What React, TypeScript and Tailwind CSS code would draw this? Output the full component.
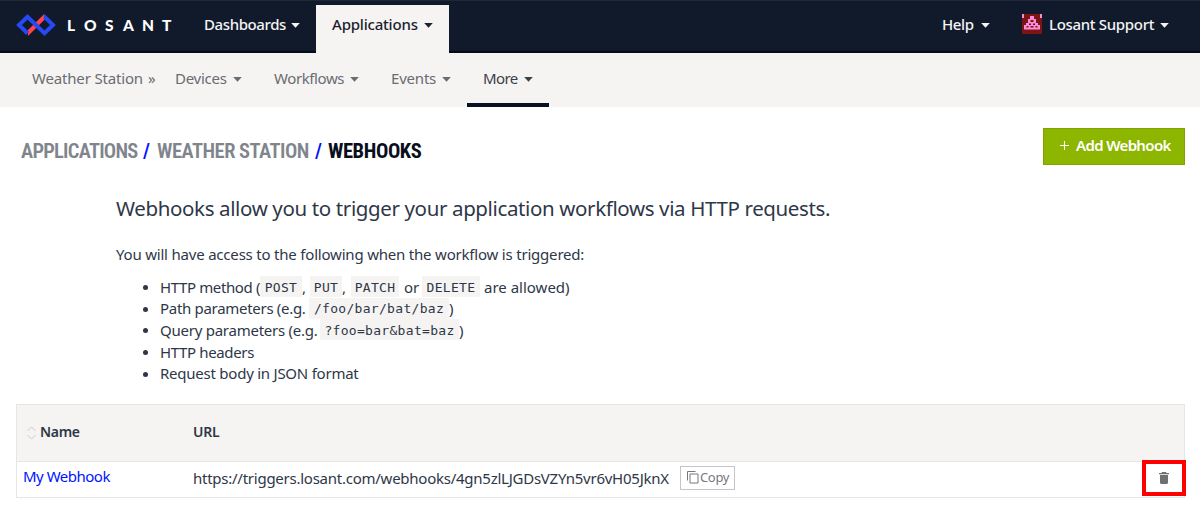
import type { ReactNode } from 'react';

function Caret({ className = '' }: { className?: string }) {
  return (
    <svg viewBox="0 0 9 5" className={`h-[5px] w-[9px] shrink-0 ${className}`}>
      <path d="M0.2 0H8.8L4.5 4.8Z" fill="currentColor" />
    </svg>
  );
}

function Logo() {
  return (
    <svg viewBox="0 0 40 22" className="mt-[14px] h-[22px] w-10 shrink-0" fill="none" strokeWidth="4">
      <path d="M28.2 0V6L12 22V16Z" fill="#ff424d" />
      <path d="M11.5 19.2L3 11L11.5 2.8L28.5 19.2L37 11L28.5 2.8" stroke="#2549f5" />
      <path d="M9.8 17.6L11.5 19.2" stroke="#2549f5" />
      <path d="M28.2 0L30 1.5V5L28.2 6Z" fill="#2549f5" />
    </svg>
  );
}

function Avatar() {
  return (
    <svg viewBox="0 0 20 20" className="h-5 w-5 shrink-0">
      <rect width="20" height="20" fill="#7f1416" />
      <path
        fill="#f98bd9"
        d="M0 0H2V4H0ZM18 0H20V4H18ZM8 2H12V5H14V9H16V11H18V15.5H2V11H4V9H6V5H8Z"
      />
      <path
        fill="#7f1416"
        d="M8.5 6H11.5V8H8.5ZM7 9.5H9V11H7ZM11 9.5H13V11H11ZM4.5 12H6.5V13.5H4.5ZM8.5 12H11.5V13.5H8.5ZM13.5 12H15.5V13.5H13.5Z"
      />
    </svg>
  );
}

function Code({ className, children }: { className: string; children: ReactNode }) {
  return (
    <code
      className={`flex h-[21px] shrink-0 items-center justify-center bg-[#f5f4f2] pt-0.5 font-['DejaVu_Sans_Mono',monospace] text-[13px] tracking-[0.3px] ${className}`}
    >
      {children}
    </code>
  );
}

function Item({ children }: { children: ReactNode }) {
  return (
    <li className="flex h-[21.6px] items-center">
      <span className="ml-[28px] mr-[12px] mt-0.5 h-[5px] w-[5px] -translate-x-px shrink-0 rounded-full bg-[#2e3748]" />
      <div className="-ml-px flex items-center">{children}</div>
    </li>
  );
}

export default function App() {
  return (
    <div className="h-[522px] w-[1200px] overflow-hidden whitespace-nowrap bg-white font-['Noto_Sans',sans-serif] text-[15px] leading-5 text-[#2e3748]">
      <header className="flex h-[53px] border-b-2 border-t border-b-[#060d19] border-t-[#1d2738] bg-[#111a2b] pl-4 font-medium text-[#f4f4f5]">
        <div className="-mt-px flex w-[188px] shrink-0">
          <Logo />
          <div className="ml-[11px] mt-[15px] flex font-['Lato',sans-serif] text-[15.5px] font-black leading-[20px] text-white">
            <span className="w-[17px]">L</span>
            <span className="w-[21px]">O</span>
            <span className="w-[18px]">S</span>
            <span className="w-[19px]">A</span>
            <span className="w-[20px]">N</span>
            <span className="w-[12px]">T</span>
          </div>
        </div>
        <nav className="flex">
          <a className="flex h-[46px] w-[112px] items-center">
            <span className="w-[87px] tracking-[-0.4px]">Dashboards</span>
            <Caret className="mt-[3px]" />
          </a>
          <a className="mt-1 flex h-[49px] w-[133px] items-center bg-[#f5f4f2] pb-[11px] pl-4 text-[#1b222d]">
            <span className="w-[92px] tracking-[-0.2px]">Applications</span>
            <Caret className="mt-[3px]" />
          </a>
        </nav>
        <div className="ml-auto flex h-[46px] items-center pr-[31px]">
          <span className="w-[39px] tracking-[-0.4px]">Help</span>
          <Caret className="mr-8 mt-[3px]" />
          <Avatar />
          <span className="ml-[7px] w-[111px] tracking-[-0.32px]">Losant Support</span>
          <Caret className="mt-[3px]" />
        </div>
      </header>

      <nav className="flex h-[54px] bg-[#f5f4f2] pl-8 text-[#696c72]">
        <span className="mt-[15px] w-[116px] tracking-[-0.17px]">Weather Station</span>
        <span className="mt-[15px] w-[27px]">»</span>
        <a className="flex h-[50px] w-[99px] items-center">
          <span className="w-[58px] tracking-[-0.25px]">Devices</span>
          <Caret className="mt-[3px]" />
        </a>
        <a className="flex h-[50px] w-[117px] items-center">
          <span className="w-[76px] tracking-[-0.4px]">Workflows</span>
          <Caret className="mt-[3px]" />
        </a>
        <a className="flex h-[50px] w-[76px] items-center">
          <span className="w-[51px] tracking-[-0.2px]">Events</span>
          <Caret className="mt-[3px]" />
        </a>
        <a className="flex h-[54px] w-[82px] items-center border-b-4 border-[#091222] pl-4 text-[#3b4049]">
          <span className="w-[41px] tracking-[-0.6px]">More</span>
          <Caret className="mt-[3px]" />
        </a>
      </nav>

      <div className="flex justify-between pl-[21px] pr-[15px] pt-[21px]">
        <h1 className="mt-[11px] flex h-6 items-center font-['Roboto_Condensed',sans-serif] text-[20.5px] font-semibold text-[#80858d]">
          <span className="w-[122px] tracking-[-0.75px]">APPLICATIONS</span>
          <span className="w-[14px] text-[#0015ff]">/</span>
          <span className="w-[158px] tracking-[-0.5px]">WEATHER STATION</span>
          <span className="w-[13px] text-[#0015ff]">/</span>
          <span className="font-bold tracking-[-0.4px] text-[#080e1b]">WEBHOOKS</span>
        </h1>
        <button className="flex h-[37px] w-[142px] items-center border border-[#7fa300] bg-[#8db600] pb-[3px] pl-4 font-semibold text-white">
          <svg viewBox="0 0 10 10" className="mr-[7px] h-[9px] w-[9px]" stroke="currentColor" strokeWidth="1.2">
            <path d="M5 0V10M0 5H10" />
          </svg>
          <span className="tracking-[-0.65px]">Add Webhook</span>
        </button>
      </div>

      <section className="h-[240px] pl-[116px] pt-[29px]">
        <h2 className="text-[20.5px] leading-7 tracking-[-0.37px]">
          Webhooks allow you to trigger your application workflows via HTTP requests.
        </h2>
        <p className="mt-[22px] h-[20px] tracking-[-0.2px]">
          You will have access to the following when the workflow is triggered:
        </p>
        <ul className="mt-[12px]">
          <Item>
            <span className="w-[100px] tracking-[-0.38px]">HTTP method (</span>
            <Code className="w-[42px]">POST</Code>
            <span className="w-[8px]">,</span>
            <Code className="w-8">PUT</Code>
            <span className="w-[9px]">,</span>
            <Code className="w-[48px]">PATCH</Code>
            <span className="w-[23px] pl-[5px]">or</span>
            <Code className="w-[58px]">DELETE</Code>
            <span className="pl-1">are allowed)</span>
          </Item>
          <Item>
            <span className="w-[149px] tracking-[-0.3px]">Path parameters (e.g.</span>
            <Code className="w-[140px]">/foo/bar/bat/baz</Code>
            <span>)</span>
          </Item>
          <Item>
            <span className="w-[160px] tracking-[-0.25px]">Query parameters (e.g.</span>
            <Code className="w-[139px]">?foo=bar&amp;bat=baz</Code>
            <span>)</span>
          </Item>
          <Item>
            <span className="tracking-[-0.36px]">HTTP headers</span>
          </Item>
          <Item>
            <span className="tracking-[-0.24px]">Request body in JSON format</span>
          </Item>
        </ul>
      </section>

      <div className="-mt-px ml-4 mr-[15px] flex h-[94px] flex-col border border-[#e4e6e9]">
        <div className="flex h-[57px] shrink-0 items-center border-b border-[#e4e6e9] bg-[#f5f4f2] pb-[3px] pl-[10px] text-[14px] font-semibold">
          <svg viewBox="0 0 9 14" className="mr-1 mt-0.5 h-[14px] w-[9px]" fill="none" stroke="#c9cac9" strokeWidth="1">
            <path d="M0.5 5L4.5 1L8.5 5M0.5 9L4.5 13L8.5 9" />
          </svg>
          <span className="w-[153px] tracking-[-0.3px]">Name</span>
          <span className="tracking-[-0.2px]">URL</span>
        </div>
        <div className="flex h-[35px] items-start pl-1.5">
          <a className="mt-1 w-[170px] tracking-[-0.5px] text-[#0015ff]">My Webhook</a>
          <span className="mt-[6px] w-[487px] tracking-[-0.25px]">
            https://triggers.losant.com/webhooks/4gn5zlLJGDsVZYn5vr6vH05JknX
          </span>
          <button className="mt-1 flex h-6 w-[55px] items-center border border-[#c3c5c8] pb-0.5 pl-1.5 text-[13px] tracking-[-0.35px] text-[#747981]">
            <svg viewBox="0 0 12 13" className="mr-px h-[13px] w-3" fill="none" stroke="currentColor">
              <path d="M0.5 9.5V0.5H8.5M3 3H11V12H3Z" />
            </svg>
            Copy
          </button>
          <div className="-mr-[2px] -mt-[2px] ml-auto flex h-9 w-11 items-center justify-center border-4 border-[#ff0000] bg-white">
            <svg viewBox="0 0 10 12" className="h-3 w-[10px]" fill="#707070">
              <path d="M3 0H7L7.5 1H10V2.2H0V1H2.5ZM1 3H9V10.5Q9 12 7.5 12H2.5Q1 12 1 10.5Z" />
            </svg>
          </div>
        </div>
      </div>
    </div>
  );
}
